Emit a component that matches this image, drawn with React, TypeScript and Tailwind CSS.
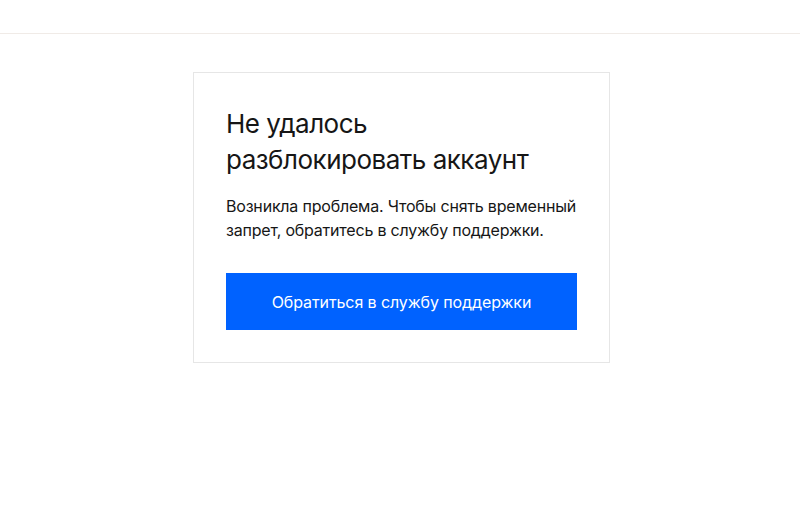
export default function App() {
  return (
    <div className="min-h-[515px] bg-white" style={{ fontFamily: 'Inter, "Noto Sans", sans-serif' }}>
      <div className="h-[34px] border-b border-[#f0ebe7]" />
      <div className="flex justify-center pl-[3px] pt-[38px]">
        <div className="w-[417px] border border-[#e6e6e6] px-[32px] pt-[33px] pb-[32px]">
          <h1 className="text-[26px] leading-[36px] font-normal text-[#161616] tracking-[-0.5px]">
            Не удалось
            <br />
            разблокировать аккаунт
          </h1>
          <p className="mt-[16px] text-[16px] leading-[24px] text-[#161616] tracking-[-0.2px]">
            Возникла проблема. Чтобы снять временный запрет, обратитесь в службу поддержки.
          </p>
          <button className="mt-[31px] flex h-[57px] w-full items-center justify-center bg-[#0062ff] text-[16px] tracking-[-0.1px] text-white">
            Обратиться в службу поддержки
          </button>
        </div>
      </div>
    </div>
  );
}
